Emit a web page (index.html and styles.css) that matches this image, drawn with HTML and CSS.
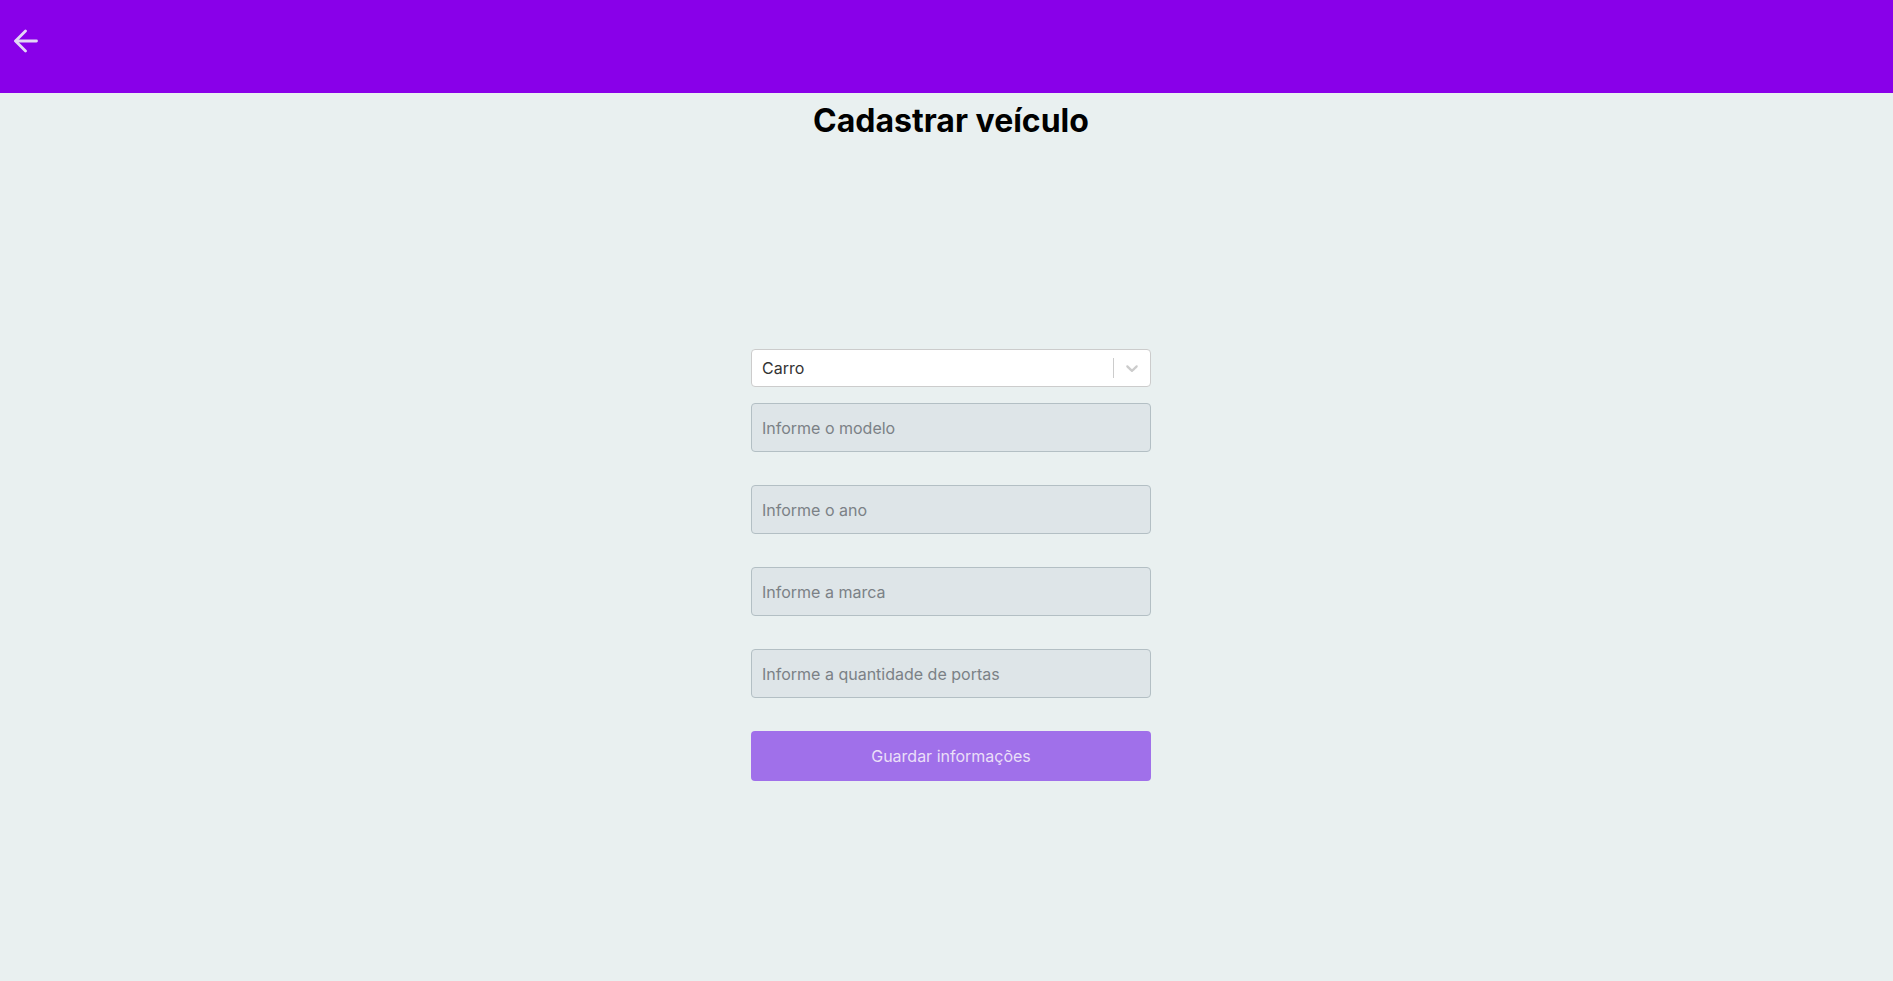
FILE: index.html
```html
<!DOCTYPE html>
<html lang="pt-BR">
<head>
<meta charset="utf-8">
<title>Cadastrar veículo</title>
<link rel="stylesheet" href="styles.css">
</head>
<body>
<header class="topbar">
  <button class="back" aria-label="Voltar">
    <svg width="24" height="24" viewBox="0 0 24 24" fill="none" stroke="currentColor" stroke-width="2.8" stroke-linecap="round" stroke-linejoin="round">
      <line x1="2" y1="12" x2="22.5" y2="12"/>
      <polyline points="11.5,2 1.5,12 11.5,22"/>
    </svg>
  </button>
</header>
<main class="page">
  <h1 class="title">Cadastrar veículo</h1>
  <form class="form">
    <div class="select">
      <div class="select-value">Carro</div>
      <div class="select-indicators">
        <span class="separator"></span>
        <span class="dropdown">
          <svg width="20" height="20" viewBox="0 0 20 20" fill="currentColor"><path d="M4.516 7.548c0.436-0.446 1.043-0.481 1.576 0l3.908 3.747 3.908-3.747c0.533-0.481 1.141-0.446 1.574 0 0.436 0.445 0.408 1.197 0 1.615-0.406 0.418-4.695 4.502-4.695 4.502-0.217 0.223-0.502 0.335-0.787 0.335s-0.57-0.112-0.789-0.335c0 0-4.287-4.084-4.695-4.502s-0.436-1.170 0-1.615z"/></svg>
        </span>
      </div>
    </div>
    <input class="field first" type="text" placeholder="Informe o modelo">
    <input class="field" type="text" placeholder="Informe o ano">
    <input class="field" type="text" placeholder="Informe a marca">
    <input class="field" type="text" placeholder="Informe a quantidade de portas">
    <button class="submit" type="button">Guardar informações</button>
  </form>
</main>
</body>
</html>
```
FILE: styles.css
```css
* { box-sizing: border-box; }
html, body { margin: 0; padding: 0; }
body {
  background: #e9f0f0;
  font-family: Inter, "Noto Sans", sans-serif;
  min-height: 100vh;
}
.topbar {
  height: 93px;
  background: #8900e9;
  display: flex;
  align-items: flex-start;
  padding-left: 14px;
  padding-top: 29px;
}
.back {
  border: 0;
  background: transparent;
  padding: 0;
  color: #e3d6f6;
  display: flex;
  cursor: pointer;
}
.page {
  display: flex;
  flex-direction: column;
  align-items: center;
  padding-left: 9px;
}
.title {
  margin: 8px 0 0;
  font-size: 32px;
  line-height: 39px;
  font-weight: 700;
  color: #000;
}
.form {
  width: 400px;
  margin-top: 209px;
  display: flex;
  flex-direction: column;
}
.select {
  height: 38px;
  background: #fff;
  border: 1px solid #cccccc;
  border-radius: 4px;
  display: flex;
  align-items: center;
}
.select-value {
  flex: 1;
  padding-left: 10px;
  font-size: 16px;
  color: #333;
}
.select-indicators {
  display: flex;
  align-items: center;
  align-self: stretch;
}
.separator {
  width: 1px;
  align-self: stretch;
  margin: 8px 0;
  background: #cccccc;
}
.dropdown {
  color: #cccccc;
  padding: 8px;
  display: flex;
}
.field {
  height: 49px;
  margin-bottom: 33px;
  background: #dee5e8;
  border: 1px solid #b3bfc4;
  border-radius: 4px;
  padding: 0 10px;
  font-family: inherit;
  font-size: 16px;
  color: #333;
}
.field.first { margin-top: 16px; }
.field::placeholder { color: #7b8186; }
.submit {
  height: 50px;
  background: #a070ea;
  border: 0;
  border-radius: 4px;
  font-family: inherit;
  font-size: 16px;
  color: #eadff8;
  cursor: pointer;
}
```
